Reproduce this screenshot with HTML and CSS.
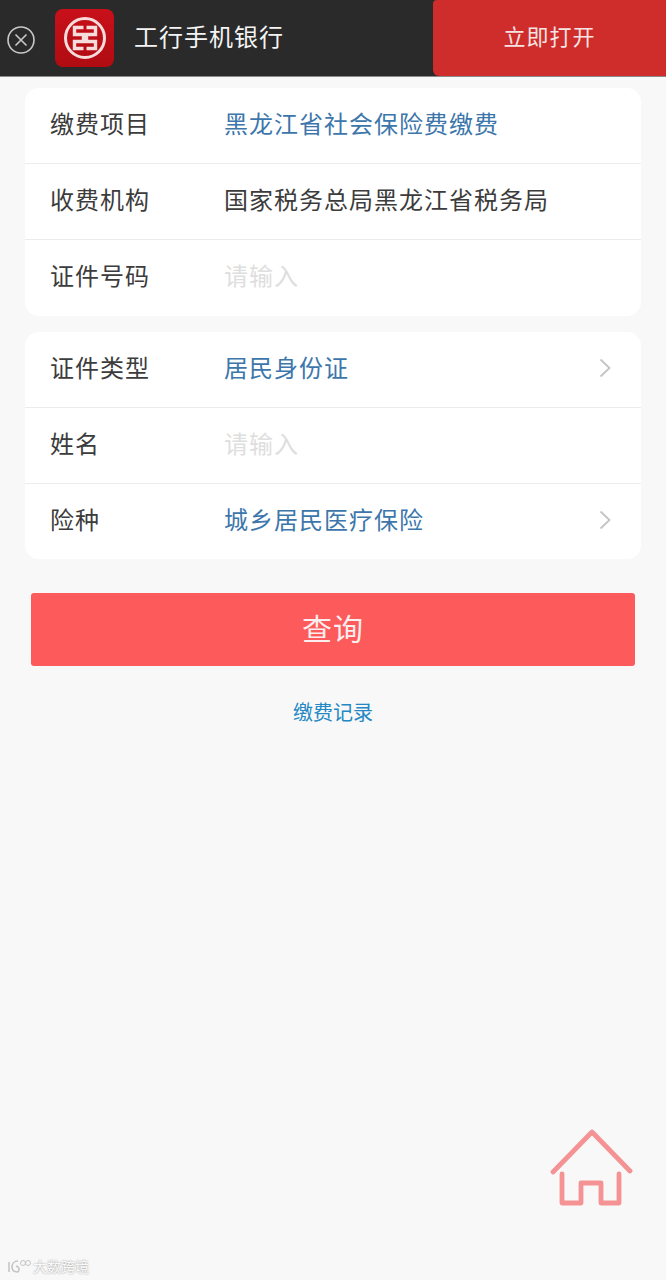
FILE: index.html
```html
<!DOCTYPE html>
<html lang="zh-CN">
<head>
  <meta charset="UTF-8">
  <meta name="viewport" content="width=device-width, initial-scale=1.0">
  <title>社会保险费缴费</title>
  <link rel="stylesheet" href="styles.css">
</head>
<body>
  <header class="app-bar">
    <svg class="close-icon" viewBox="0 0 28 28" width="28" height="28">
      <circle cx="14" cy="14" r="13" fill="none" stroke="#c9c9c9" stroke-width="1.6"/>
      <path d="M8.5 8.5l11 11M19.5 8.5l-11 11" fill="none" stroke="#c9c9c9" stroke-width="1.6"/>
    </svg>
    <div class="app-logo">
      <svg viewBox="-24 -24 48 48" width="48" height="48">
        <circle r="19.500" fill="none" stroke="#f7dcdc" stroke-width="3"/>
        <path d="M-1.500 -10.500H-10.500V-3.500H-1.500V3.500H-10.500V10.500H-1.500M1.500 -10.500H10.500V-3.500H1.500V3.500H10.500V10.500H1.500" fill="none" stroke="#f7dcdc" stroke-width="3.400"/>
      </svg>
    </div>
    <span class="app-name">工行手机银行</span>
    <a class="open-btn">立即打开</a>
  </header>

  <main class="content">
    <section class="card">
      <div class="row">
        <span class="label">缴费项目</span>
        <span class="value link">黑龙江省社会保险费缴费</span>
      </div>
      <div class="row">
        <span class="label">收费机构</span>
        <span class="value">国家税务总局黑龙江省税务局</span>
      </div>
      <div class="row">
        <span class="label">证件号码</span>
        <span class="value placeholder">请输入</span>
      </div>
    </section>

    <section class="card">
      <div class="row">
        <span class="label">证件类型</span>
        <span class="value link">居民身份证</span>
        <svg class="chevron" viewBox="0 0 12 20" width="12" height="20"><path d="M1.500 1.500l9 8.500-9 8.500" fill="none" stroke="#c4c4c4" stroke-width="1.800"/></svg>
      </div>
      <div class="row">
        <span class="label">姓名</span>
        <span class="value placeholder">请输入</span>
      </div>
      <div class="row">
        <span class="label">险种</span>
        <span class="value link">城乡居民医疗保险</span>
        <svg class="chevron" viewBox="0 0 12 20" width="12" height="20"><path d="M1.500 1.500l9 8.500-9 8.500" fill="none" stroke="#c4c4c4" stroke-width="1.800"/></svg>
      </div>
    </section>

    <button class="query-btn"><span>查询</span></button>
    <a class="records">缴费记录</a>
  </main>

  <svg class="home-icon" viewBox="0 0 84 80" width="84" height="80">
    <path d="M4 43L43 3l38 39" fill="none" stroke="#f49294" stroke-width="4.800" stroke-linecap="round" stroke-linejoin="round"/>
    <path d="M13 45v29h19V54h20v20h18V45" fill="none" stroke="#f49294" stroke-width="4.800" stroke-linecap="round" stroke-linejoin="round"/>
  </svg>

  <div class="watermark">
    <svg viewBox="0 0 26 16" width="26" height="16">
      <path d="M3 4v10M12 3C8 3 6 6 6 9s2 5 6 5M10 8c3 1 4 3 2 6" fill="none" stroke="#c4c4c4" stroke-width="1.500"/>
      <circle cx="17" cy="5" r="2.500" fill="none" stroke="#c4c4c4"/>
      <circle cx="22" cy="5" r="2.500" fill="none" stroke="#c4c4c4"/>
    </svg>
    <span>大数跨境</span>
  </div>
</body>
</html>
```

FILE: styles.css
```css
* {
  margin: 0;
  padding: 0;
  box-sizing: border-box;
}

html, body {
  width: 100%;
  height: 100%;
}

body {
  position: relative;
  background-color: #f8f8f8;
  font-family: "Noto Sans CJK SC", "Liberation Sans", sans-serif;
  overflow: hidden;
}

.app-bar {
  display: flex;
  align-items: center;
  height: 77px;
  background-color: #2a2a2a;
  border-bottom: 1px solid #8a8a8a;
}

.close-icon {
  flex: none;
  margin-left: 7px;
  margin-top: 3px;
}

.app-logo {
  display: flex;
  flex: none;
  justify-content: center;
  align-items: center;
  width: 59px;
  height: 58px;
  margin-left: 20px;
  border-radius: 8px;
  background-image: linear-gradient(#c8101a, #b00c12);
}

.app-name {
  margin-left: 20px;
  padding-bottom: 5px;
  font-size: 24px;
  letter-spacing: 1px;
  color: #f4f4f4;
}

.open-btn {
  display: flex;
  justify-content: center;
  align-items: center;
  width: 233px;
  height: 76px;
  margin-left: auto;
  padding-bottom: 6px;
  border-radius: 4px 0 0 6px;
  font-size: 22px;
  letter-spacing: 1px;
  color: #f6e4e3;
  background-color: #cf2c2c;
}

.content {
  display: flex;
  flex-direction: column;
  padding: 11px 25px 0;
}

.card {
  margin-bottom: 16px;
  border-radius: 14px;
  background-color: #fff;
}

.row {
  display: flex;
  align-items: center;
  height: 76px;
  padding: 0 30px 7px 25px;
  border-bottom: 1px solid #ececec;
  font-size: 24px;
  letter-spacing: 1px;
}

.row:last-child {
  border-bottom: none;
}

.card + .card .row:last-child {
  height: 75px;
}

.label {
  flex: none;
  width: 174px;
  color: #3c3c3c;
}

.value {
  flex: 1;
  color: #3c3c3c;
}

.link {
  color: #3c76ab;
}

.placeholder {
  color: #dedede;
}

.chevron {
  margin-top: 3px;
}

.query-btn {
  height: 73px;
  margin: 18px 6px 0 6px;
  padding-bottom: 6px;
  border: none;
  border-radius: 3px;
  font-family: inherit;
  font-size: 30px;
  letter-spacing: 1px;
  color: #fbeeee;
  background-color: #fd5a5c;
}

.records {
  margin-top: 31px;
  text-align: center;
  font-size: 20px;
  color: #2488c4;
}

.home-icon {
  position: absolute;
  left: 549px;
  top: 1129px;
}

.watermark {
  position: absolute;
  left: 6px;
  top: 1256px;
  display: flex;
  align-items: center;
  gap: 1px;
  font-size: 14px;
  color: #fafafa;
  text-shadow: 0 0 2px #8c8c8c;
}
```
